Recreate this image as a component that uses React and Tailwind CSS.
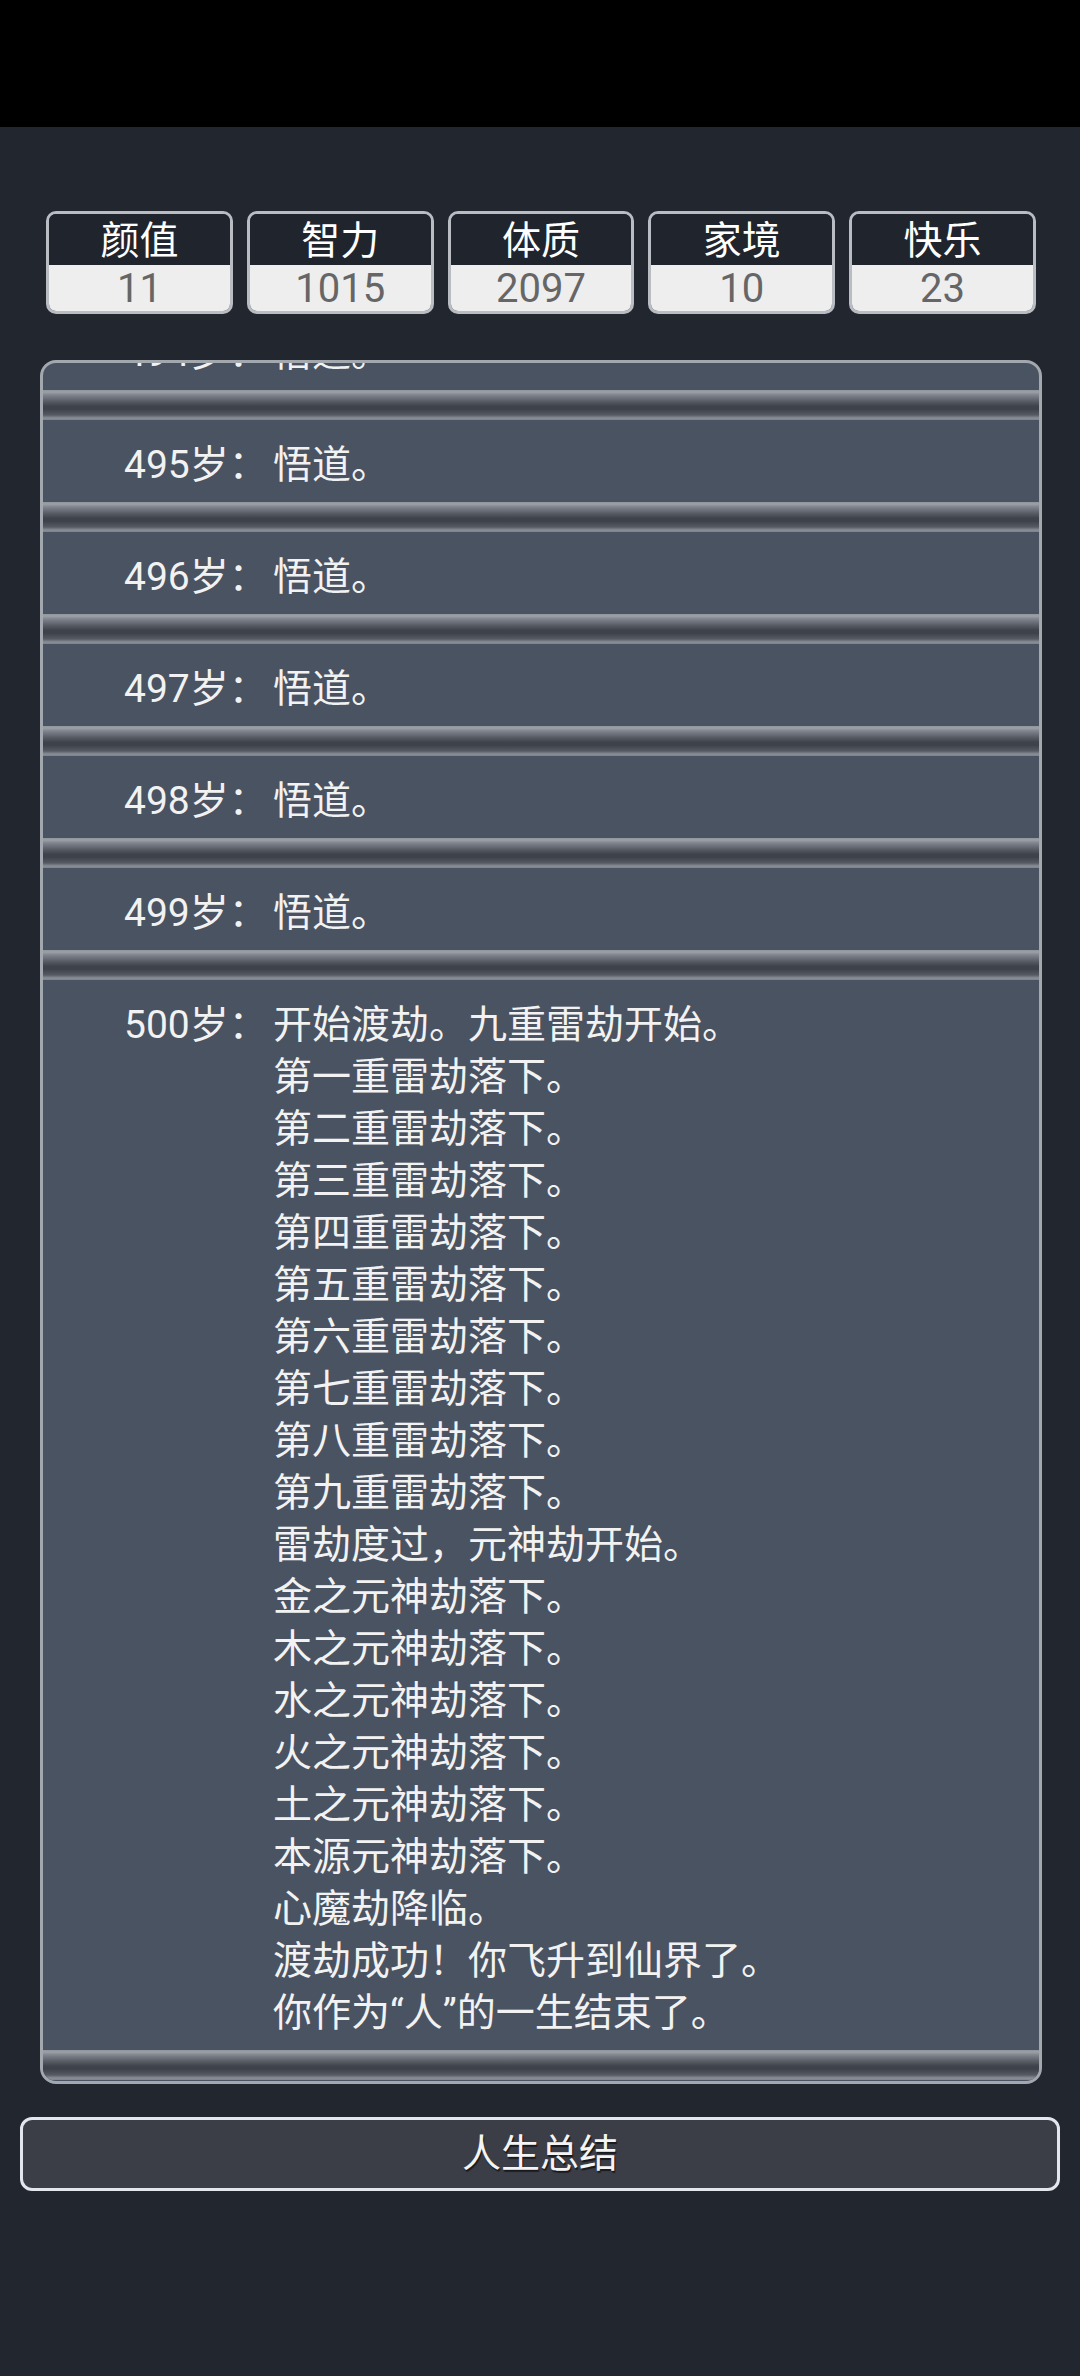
const stats = [
  { label: '颜值', value: 11 },
  { label: '智力', value: 1015 },
  { label: '体质', value: 2097 },
  { label: '家境', value: 10 },
  { label: '快乐', value: 23 },
];

const simpleRows = [494, 495, 496, 497, 498, 499];

const finalLines = [
  '开始渡劫。九重雷劫开始。',
  '第一重雷劫落下。',
  '第二重雷劫落下。',
  '第三重雷劫落下。',
  '第四重雷劫落下。',
  '第五重雷劫落下。',
  '第六重雷劫落下。',
  '第七重雷劫落下。',
  '第八重雷劫落下。',
  '第九重雷劫落下。',
  '雷劫度过，元神劫开始。',
  '金之元神劫落下。',
  '木之元神劫落下。',
  '水之元神劫落下。',
  '火之元神劫落下。',
  '土之元神劫落下。',
  '本源元神劫落下。',
  '心魔劫降临。',
  '渡劫成功！你飞升到仙界了。',
  '你作为“人”的一生结束了。',
];

function Separator() {
  return (
    <div className="h-[30px] w-full bg-[linear-gradient(to_bottom,#8f949c_0px,#9ca0a7_2px,#80858d_5px,#5a5e67_11px,#3f434b_16px,#3d414a_19px,#555a63_25px,#8a8f97_28px,#7d828b_30px)]" />
  );
}

function Row({ age, lines, tall }) {
  return (
    <div>
      <div className={`flex pl-[81px] pr-6 pt-[19px] pb-[11px] ${tall ? '' : 'h-[82px]'}`}>
        <div className="w-[149px] shrink-0 whitespace-nowrap">{age}岁：</div>
        <div className="flex flex-col">
          {lines.map((l, i) => (
            <div key={i} className="whitespace-nowrap">{l}</div>
          ))}
        </div>
      </div>
      <Separator />
    </div>
  );
}

export default function App() {
  return (
    <div
      className="w-[1080px] h-[2376px] bg-[#21262f] flex flex-col overflow-hidden"
      style={{ fontFamily: 'Roboto, "Noto Sans CJK SC", "Noto Sans", sans-serif' }}
    >
      {/* status bar */}
      <div className="h-[127px] bg-black shrink-0" />

      {/* stats */}
      <div className="flex gap-[14px] pl-[46px] pr-[44px] mt-[84px]">
        {stats.map((s) => (
          <div
            key={s.label}
            className="flex-1 h-[103px] rounded-[10px] border-[3px] border-[#b9bdc3] overflow-hidden flex flex-col"
          >
            <div className="h-[51px] pt-[3px] bg-[#20242d] text-white text-[39px] leading-[48px] text-center">
              {s.label}
            </div>
            <div className="flex-1 pt-[2px] bg-[#eeeeee] text-[#666666] text-[40px] leading-[44px] text-center">
              {s.value}
            </div>
          </div>
        ))}
      </div>

      {/* trajectory */}
      <div className="mt-[46px] ml-[40px] mr-[38px] h-[1724px] rounded-[16px] border-[3px] border-[#a3a7ae] bg-[#4a5361] overflow-hidden">
        <div className="-mt-[55px] text-[39px] leading-[52px] text-[#f2f2f2]">
          {simpleRows.map((a) => (
            <Row key={a} age={a} lines={['悟道。']} />
          ))}
          <Row age={500} lines={finalLines} tall />
        </div>
      </div>

      {/* summary button */}
      <div className="mt-[33px] mx-[20px] h-[74px] rounded-[12px] border-[3px] border-[#e3e6ec] bg-[#3b3e47] flex items-center justify-center">
        <span className="text-[39px] text-[#f4f4f4] [text-shadow:1px_2px_1px_rgba(0,0,0,0.6)]">人生总结</span>
      </div>
    </div>
  );
}
